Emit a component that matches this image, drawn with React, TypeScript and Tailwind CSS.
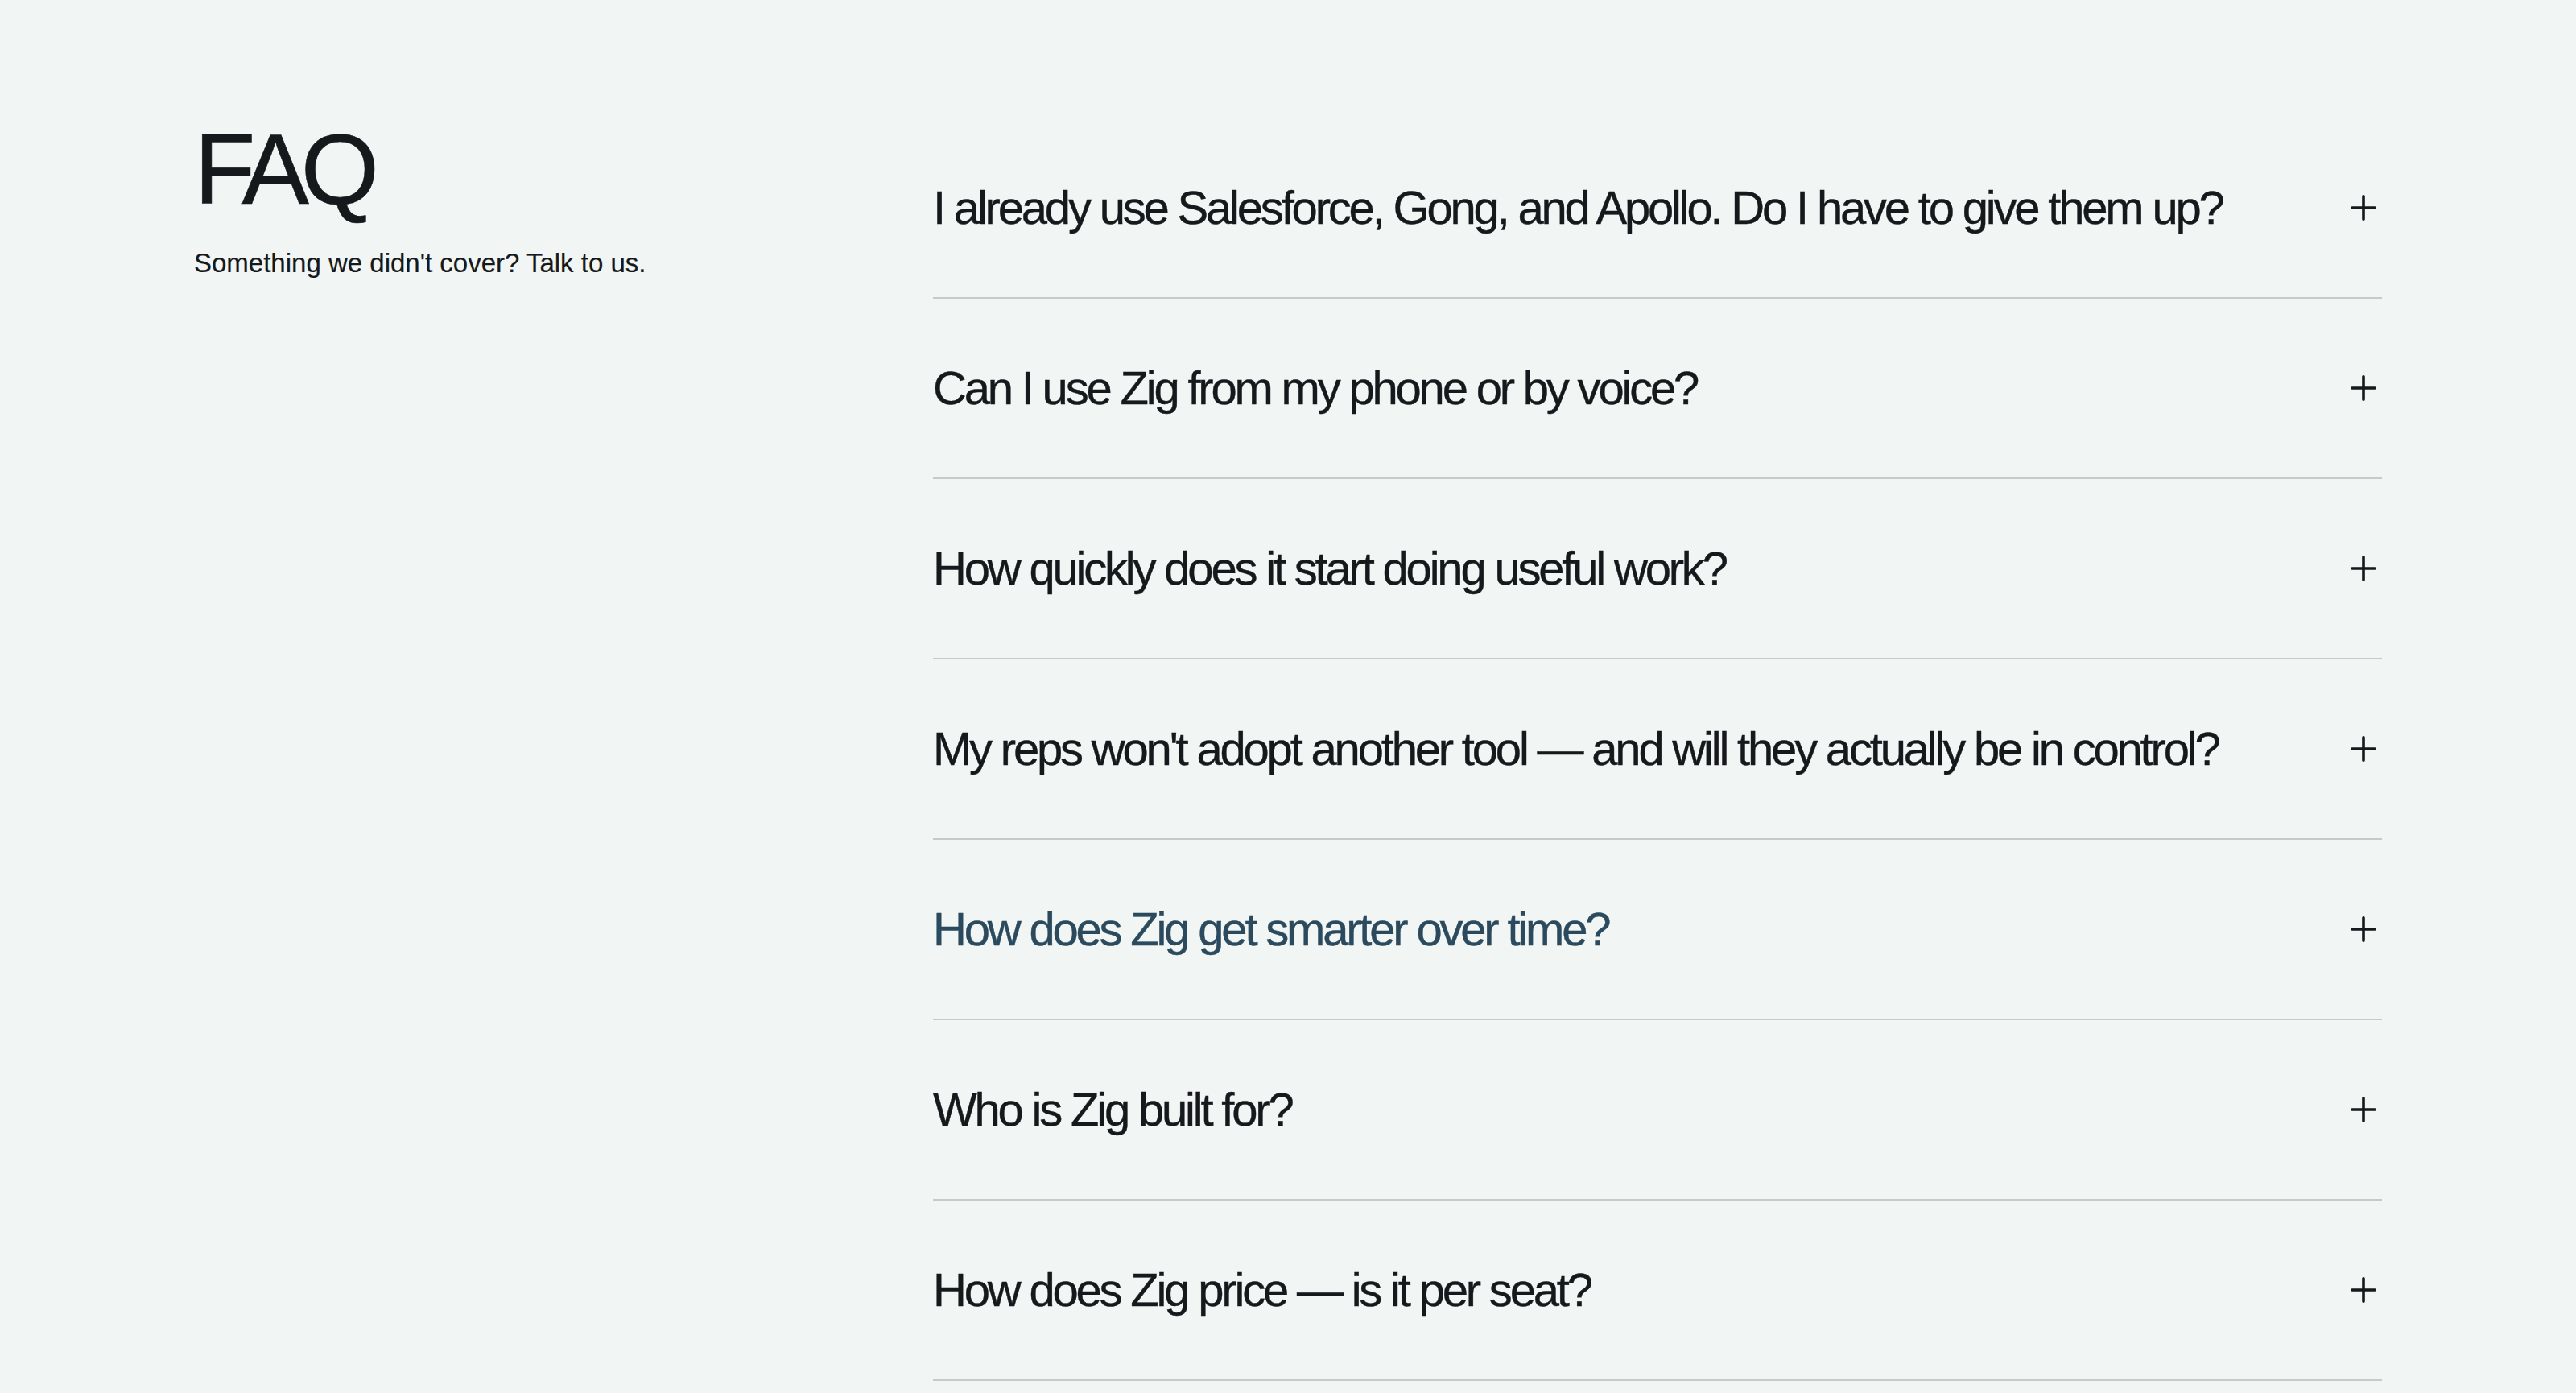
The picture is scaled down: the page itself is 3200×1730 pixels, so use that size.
import React from 'react';

const questions = [
  'I already use Salesforce, Gong, and Apollo. Do I have to give them up?',
  'Can I use Zig from my phone or by voice?',
  'How quickly does it start doing useful work?',
  "My reps won't adopt another tool \u2014 and will they actually be in control?",
  'How does Zig get smarter over time?',
  'Who is Zig built for?',
  'How does Zig price \u2014 is it per seat?',
];

const PlusIcon: React.FC = () => (
  <svg width="32" height="32" viewBox="0 0 32 32" fill="none" className="shrink-0">
    <path d="M16 1.8v28.4M1.8 16h28.4" stroke="currentColor" strokeWidth="3.6" strokeLinecap="round" />
  </svg>
);

const App: React.FC = () => {
  return (
    <div className="min-h-screen bg-[#f1f5f4] text-[#16191c] font-['Liberation_Sans',Arial,sans-serif]">
      <div className="flex px-[241px] pt-[147px]">
        {/* Left column */}
        <div className="w-[918px] shrink-0">
          <h1 className="text-[125px] leading-none tracking-[-0.08em] font-normal [-webkit-text-stroke:0.6px_currentColor]">
            FAQ
          </h1>
          <p className="mt-[38px] text-[33px] leading-none tracking-[0em] [-webkit-text-stroke:0.2px_currentColor]">
            Something we didn't cover? Talk to us.
          </p>
        </div>

        {/* Questions */}
        <div className="flex-1">
          {questions.map((q, i) => (
            <button
              key={q}
              className={`flex w-full h-[224px] items-center justify-between border-b-2 border-[#c6cac9] text-left ${
                i === 4 ? 'text-[#2b4a5d]' : 'text-[#16191c]'
              }`}
            >
              <span className="text-[58px] leading-none tracking-[-0.055em] [-webkit-text-stroke:0.4px_currentColor]">
                {q}
              </span>
              <span className="mr-[7px] text-[#16191c]">
                <PlusIcon />
              </span>
            </button>
          ))}
        </div>
      </div>
    </div>
  );
};

export default App;
